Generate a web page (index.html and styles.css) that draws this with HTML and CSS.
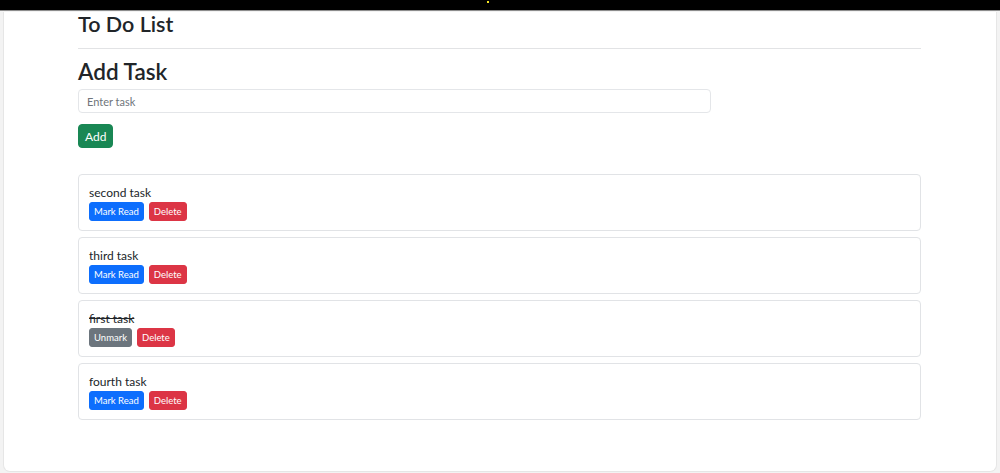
FILE: index.html
```html
<!DOCTYPE html>
<html lang="en">
<head>
<meta charset="utf-8">
<title>To Do List</title>
<link rel="stylesheet" href="styles.css">
</head>
<body>
<div class="topbar"><span class="dot"></span></div>
<div class="frame">
  <div class="container">
    <h1 class="title">To Do List</h1>
    <hr class="rule">
    <h2 class="subtitle">Add Task</h2>
    <input class="task-input" type="text" placeholder="Enter task">
    <button class="btn btn-success btn-add">Add</button>
    <div class="list">
      <div class="card">
        <div class="task-text">second task</div>
        <div class="actions"><button class="btn btn-sm btn-primary">Mark Read</button><button class="btn btn-sm btn-danger">Delete</button></div>
      </div>
      <div class="card">
        <div class="task-text">third task</div>
        <div class="actions"><button class="btn btn-sm btn-primary">Mark Read</button><button class="btn btn-sm btn-danger">Delete</button></div>
      </div>
      <div class="card">
        <div class="task-text done">first task</div>
        <div class="actions"><button class="btn btn-sm btn-secondary">Unmark</button><button class="btn btn-sm btn-danger">Delete</button></div>
      </div>
      <div class="card">
        <div class="task-text">fourth task</div>
        <div class="actions"><button class="btn btn-sm btn-primary">Mark Read</button><button class="btn btn-sm btn-danger">Delete</button></div>
      </div>
    </div>
  </div>
</div>
</body>
</html>
```
FILE: styles.css
```css
html, body {
  margin: 0;
  padding: 0;
}
body {
  background: #f3f3f3;
  font-family: Lato, "Open Sans", sans-serif;
  color: #212529;
  height: 473px;
  overflow: hidden;
}
.topbar {
  height: 11px;
  background: #000;
  border-bottom: 1px solid #8d8d8d;
  box-sizing: border-box;
  display: flex;
}
.dot {
  width: 2px;
  height: 2px;
  margin-left: 487px;
  margin-top: 1px;
  background: #f5e625;
}
.frame {
  margin: 0 3px 0 3px;
  height: 460px;
  box-sizing: border-box;
  background: #fff;
  border: 1px solid #e6e6e6;
  border-top: none;
  border-radius: 0 0 7px 7px;
}
.container {
  margin-left: 74px;
  width: 843px;
}
.title {
  margin: 1px 0 0 0;
  font-size: 21.5px;
  line-height: 1.2;
  font-weight: 600;
}
.rule {
  border: 0;
  border-top: 1px solid #e2e3e5;
  margin: 10px 0 9px 0;
}
.subtitle {
  margin: 0 0 4.6px 0;
  font-size: 22.5px;
  line-height: 1.2;
  font-weight: 600;
}
.task-input {
  display: block;
  box-sizing: border-box;
  width: 633px;
  height: 24px;
  margin: 0;
  padding: 0 8px;
  border: 1px solid #e4e6e9;
  border-radius: 4px;
  font-family: inherit;
  font-size: 11px;
  color: #212529;
  outline: none;
}
.task-input::placeholder {
  color: #6f757b;
}
.btn {
  display: inline-block;
  box-sizing: border-box;
  border: 1px solid transparent;
  color: #fff;
  font-family: inherit;
  cursor: pointer;
  margin: 0;
}
.btn-add {
  display: block;
  margin-top: 11px;
  height: 24px;
  padding: 0 6px;
  font-size: 12px;
  border-radius: 4px;
}
.btn-success { background: #198754; border-color: #198754; }
.btn-primary { background: #0d6efd; border-color: #0d6efd; }
.btn-danger { background: #dc3545; border-color: #dc3545; }
.btn-secondary { background: #6c757d; border-color: #6c757d; }
.list {
  margin-top: 26px;
  display: flex;
  flex-direction: column;
  gap: 6px;
}
.card {
  box-sizing: border-box;
  height: 57px;
  border: 1px solid #e1e3e6;
  border-radius: 4px;
  padding: 9px 10px;
}
.task-text {
  font-size: 12px;
  line-height: 18px;
}
.done {
  text-decoration: line-through;
}
.actions {
  display: flex;
  gap: 5px;
}
.btn-sm {
  height: 19px;
  padding: 0 4px;
  font-size: 9.5px;
  line-height: 17px;
  border-radius: 3px;
}
```
